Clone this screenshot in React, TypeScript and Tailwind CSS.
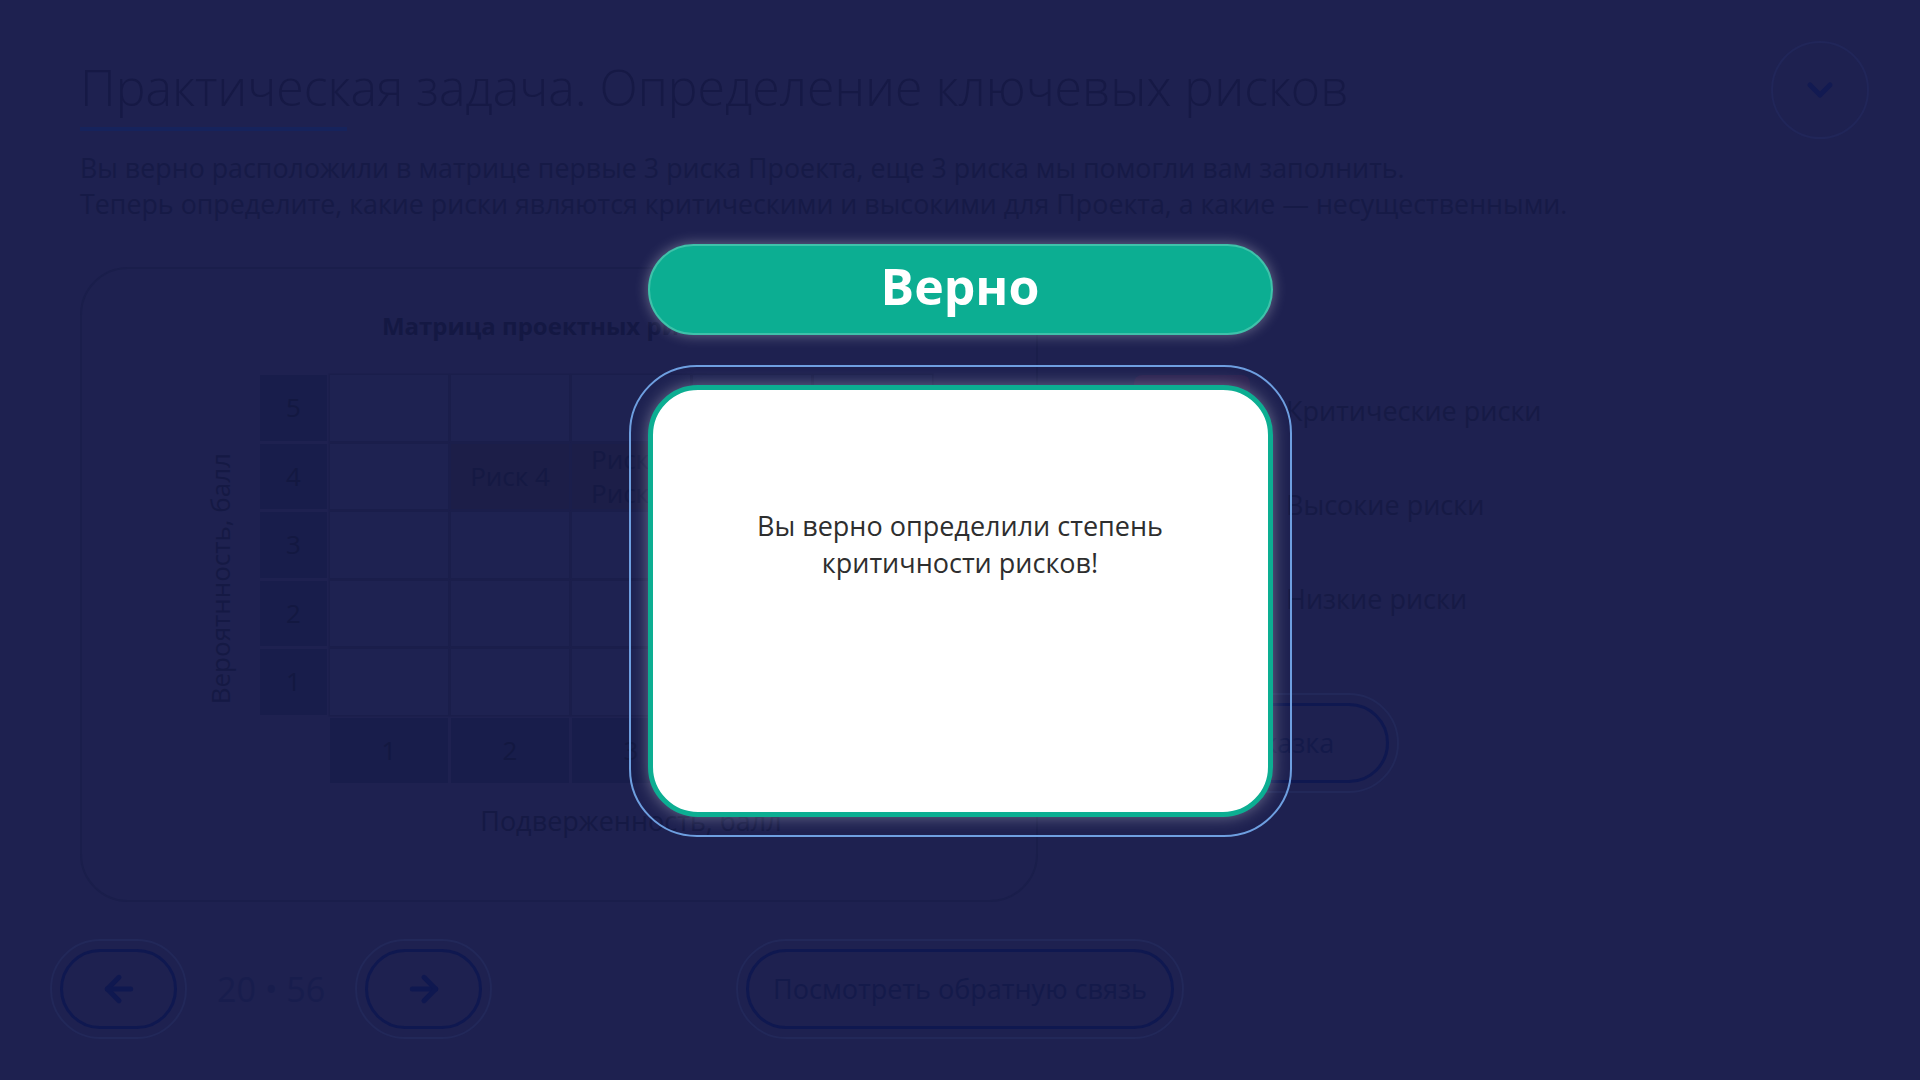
import { ArrowLeft, ArrowRight, ChevronDown } from 'lucide-react'

const rows = [5, 4, 3, 2, 1]
const cols = [1, 2, 3, 4, 5]

const cellText: Record<string, string[]> = {
  '4-2': ['Риск 4'],
  '4-3': ['Риск 5', 'Риск 6'],
}

const legend = [
  { label: 'Критические риски', box: 'bg-[#2a2150]' },
  { label: 'Высокие риски', box: 'bg-[#2a294a]' },
  { label: 'Низкие риски', box: 'bg-[#1b2a4c]' },
]

const RoundButton = ({ children, className }: { children: React.ReactNode; className?: string }) => (
  <div className="rounded-full border-2 border-[#222859] p-[8px]">
    <div
      className={`flex h-[80px] items-center justify-center rounded-full border-[3px] border-[#0f1850] ${className ?? ''}`}
    >
      {children}
    </div>
  </div>
)

const Matrix = () => (
  <div className="h-[635px] w-[958px] shrink-0 rounded-[48px] border-2 border-[#1a1e4b] pt-[41px]">
    <div className="text-center text-[24px] leading-[32px] font-bold text-[#141843]">Матрица проектных рисков</div>
    <div className="mt-[33px] flex pl-[120px]">
      <div className="w-[36px] self-center text-center text-[26px] leading-[36px] text-[#151944] [writing-mode:vertical-rl] rotate-180">
        Вероятнность, балл
      </div>
      <div className="ml-[22px] grid grid-cols-[67px_repeat(5,118px)] grid-rows-[repeat(6,65.5px)] gap-[3px]">
        {rows.map((r) => [
          <div
            key={`h${r}`}
            className="flex items-center justify-center bg-[#181d4b] text-[26px] text-[#131841]"
          >
            {r}
          </div>,
          ...cols.map((c) => {
            const lines = cellText[`${r}-${c}`]
            return (
              <div
                key={`${r}-${c}`}
                className={`flex flex-col justify-center text-[26px] leading-[34px] text-[#151943] shadow-[0_0_0_1.5px_#1a1e4b] ${
                  lines ? 'bg-[#1c1e48]' : 'bg-[#1e2251]'
                } ${lines && lines.length > 1 ? 'items-start pl-[19px]' : 'items-center'}`}
              >
                {lines?.map((l) => (
                  <span key={l}>{l}</span>
                ))}
              </div>
            )
          }),
        ])}
        <div />
        {cols.map((c) => (
          <div
            key={`b${c}`}
            className="flex items-center justify-center bg-[#181d4b] text-[26px] text-[#131841]"
          >
            {c}
          </div>
        ))}
      </div>
    </div>
    <div className="mt-[20px] ml-[248px] w-[602px] text-center text-[27px] leading-[36px] text-[#151944]">
      Подверженность, балл
    </div>
  </div>
)

export default function App() {
  return (
    <div className="relative h-[1080px] w-[1920px] overflow-hidden bg-[#1e2150] font-['Open_Sans',sans-serif]">
      <div className="flex items-start justify-between pt-[41px] pr-[51px] pl-[80px]">
        <div className="mt-[15px]">
          <h1 className="text-[50px] leading-[62px] font-light text-[#161945]">
            Практическая задача. Определение ключевых рисков
          </h1>
          <div className="mt-[9px] h-[4px] w-[267px] bg-[#16235c]" />
          <p className="mt-[19px] text-[26.8px] leading-[36px] text-[#161a46]">
            Вы верно расположили в матрице первые 3 риска Проекта, еще 3 риска мы помогли вам заполнить.
            <br />
            Теперь определите, какие риски являются критическими и высокими для Проекта, а какие — несущественными.
          </p>
        </div>
        <div className="flex h-[98px] w-[98px] items-center justify-center rounded-full border-2 border-[#212659]">
          <ChevronDown size={40} strokeWidth={3} className="text-[#121a52]" />
        </div>
      </div>

      <div className="mt-[45px] flex pl-[80px]">
        <Matrix />
        <div className="ml-[96px] flex flex-col items-start pt-[108px]">
          <div className="flex flex-col gap-[22px]">
            {legend.map((item) => (
              <div key={item.label} className="flex items-center gap-[36px]">
                <div className={`h-[72px] w-[116px] rounded-[8px] ${item.box}`} />
                <span className="text-[27px] leading-[36px] text-[#161a45]">{item.label}</span>
              </div>
            ))}
          </div>
          <div className="mt-[58px]">
            <RoundButton className="px-[52px]">
              <span className="text-[27px] text-[#141a4a]">Подсказка</span>
            </RoundButton>
          </div>
        </div>
      </div>

      <div className="mt-[37px] grid grid-cols-[1fr_auto_1fr] items-center px-[50px]">
        <div className="flex items-center gap-[30px]">
          <RoundButton className="w-[117px]">
            <ArrowLeft size={40} strokeWidth={3} className="text-[#0f1850]" />
          </RoundButton>
          <span className="text-[34px] text-[#181d4d]">20 • 56</span>
          <RoundButton className="w-[117px]">
            <ArrowRight size={40} strokeWidth={3} className="text-[#0f1850]" />
          </RoundButton>
        </div>
        <RoundButton className="w-[428px]">
          <span className="text-[27px] text-[#141a4a]">Посмотреть обратную связь</span>
        </RoundButton>
        <div />
      </div>

      <div className="absolute inset-0 flex flex-col items-center justify-center">
        <div className="flex h-[91px] w-[625px] items-center justify-center rounded-full border-2 border-[#3fc2aa] bg-[#0cae92] pb-[7px] shadow-[0_0_14px_rgba(255,255,255,0.35)]">
          <span className="text-[50px] leading-none font-bold text-white">Верно</span>
        </div>
        <div className="mt-[30px] h-[472px] w-[663px] rounded-[68px] border-2 border-[#6e9fe0] px-[17px] py-[18px]">
          <div className="h-full rounded-[50px] border-[5px] border-[#0cae92] bg-white pt-[117px] text-center shadow-[0_0_16px_rgba(255,255,255,0.35)]">
            <p className="text-[27px] leading-[37px] text-[#2e2e2e]">
              Вы верно определили степень
              <br />
              критичности рисков!
            </p>
          </div>
        </div>
      </div>
    </div>
  )
}
